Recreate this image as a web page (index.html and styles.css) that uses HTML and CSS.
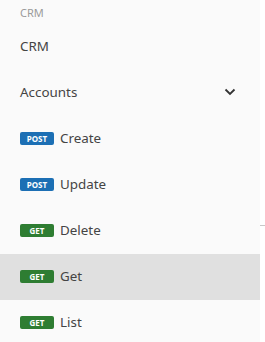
FILE: index.html
```html
<!DOCTYPE html>
<html lang="en">
<head>
  <meta charset="UTF-8">
  <title>CRM</title>
  <link rel="stylesheet" href="styles.css">
</head>
<body>
  <div class="layout">
    <nav class="sidebar">
      <div class="section-title">CRM</div>
      <a class="nav-item">CRM</a>
      <a class="nav-item group">
        Accounts
        <svg class="chevron" width="12" height="8" viewBox="0 0 12 8">
          <path d="M1.5 1.5 L6 6 L10.5 1.5" fill="none" stroke="#333" stroke-width="1.8"/>
        </svg>
      </a>
      <a class="nav-item"><span class="badge post">POST</span>Create</a>
      <a class="nav-item"><span class="badge post">POST</span>Update</a>
      <a class="nav-item"><span class="badge get">GET</span>Delete</a>
      <a class="nav-item active"><span class="badge get">GET</span>Get</a>
      <a class="nav-item"><span class="badge get">GET</span>List</a>
    </nav>
    <div class="edge"><span class="tick"></span></div>
  </div>
</body>
</html>
```

FILE: styles.css
```css
body {
  margin: 0;
  background: #fff;
  font-family: "Noto Sans", Arial, sans-serif;
  color: #333;
}
.layout {
  display: flex;
}
.sidebar {
  width: 260px;
  background: #fafafa;
  min-height: 342px;
}
.section-title {
  height: 24px;
  line-height: 25px;
  padding-left: 20px;
  font-size: 11px;
  color: #9a9a9a;
}
.nav-item {
  box-sizing: border-box;
  display: flex;
  align-items: center;
  height: 46px;
  padding: 0 24px 2px 20px;
  font-size: 13.4px;
  color: #444;
}
.nav-item.group {
  justify-content: space-between;
}
.nav-item.active {
  background: #e0e0e0;
}
.badge {
  display: inline-flex;
  align-items: center;
  justify-content: center;
  width: 34px;
  height: 13px;
  margin-right: 6px;
  border-radius: 2px;
  color: #fff;
  font-size: 8px;
  font-weight: bold;
}
.badge.post {
  background: #1c6fb4;
}
.badge.get {
  background: #2e7d32;
}
.edge {
  flex: 1;
  padding-top: 225px;
}
.tick {
  display: block;
  height: 1px;
  background: #c8c8c8;
}
```
